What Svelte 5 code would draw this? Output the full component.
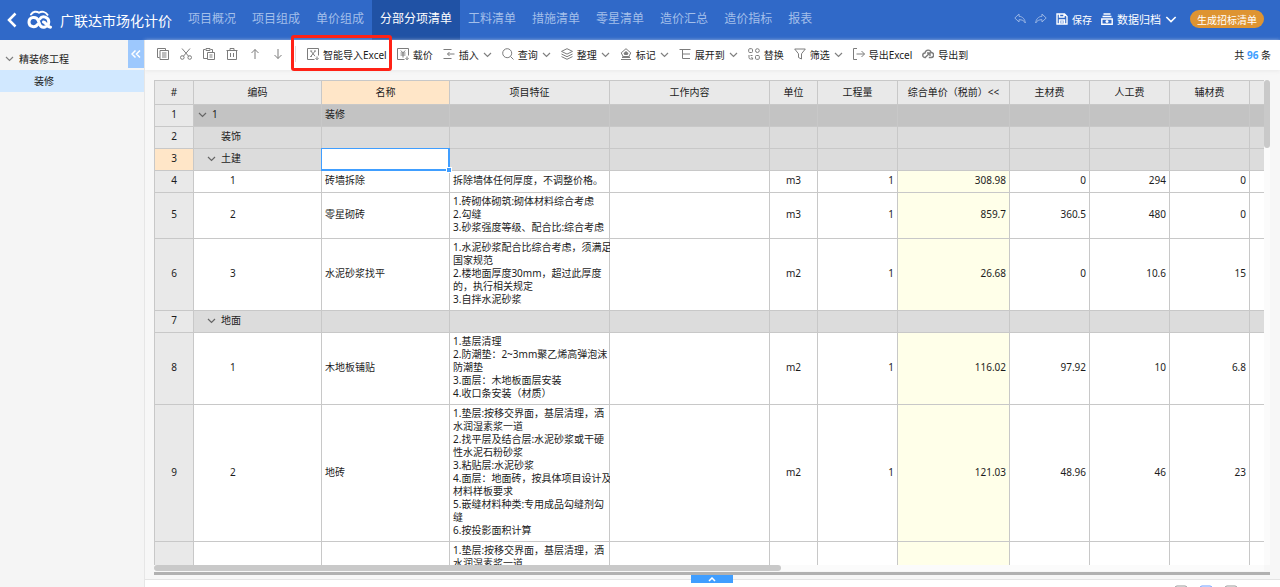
<script>
    const tabs = ['项目概况', '项目组成', '单价组成', '分部分项清单', '工料清单', '措施清单', '零星清单', '造价汇总', '造价指标', '报表'];
    let activeTab = '分部分项清单';

    const editTools = [
        { name: '复制', icon: 'copy' },
        { name: '剪切', icon: 'cut' },
        { name: '粘贴', icon: 'paste' },
        { name: '删除', icon: 'trash' },
        { name: '上移', icon: 'up' },
        { name: '下移', icon: 'down' }
    ];

    const tools = [
        { name: '智能导入Excel', icon: 'excel', marked: true },
        { name: '载价', icon: 'price' },
        { name: '插入', icon: 'insert', menu: true },
        { name: '查询', icon: 'search', menu: true },
        { name: '整理', icon: 'layers', menu: true },
        { name: '标记', icon: 'mark', menu: true },
        { name: '展开到', icon: 'expand', menu: true },
        { name: '替换', icon: 'replace' },
        { name: '筛选', icon: 'filter', menu: true },
        { name: '导出Excel', icon: 'export' },
        { name: '导出到', icon: 'cloud' }
    ];

    const columns = [
        { key: 'no', title: '#', width: 40 },
        { key: 'code', title: '编码', width: 128 },
        { key: 'name', title: '名称', width: 128 },
        { key: 'feature', title: '项目特征', width: 160 },
        { key: 'work', title: '工作内容', width: 160 },
        { key: 'unit', title: '单位', width: 48 },
        { key: 'qty', title: '工程量', width: 80 },
        { key: 'price', title: '综合单价（税前）<<', width: 112 },
        { key: 'main', title: '主材费', width: 80 },
        { key: 'labor', title: '人工费', width: 80 },
        { key: 'aux', title: '辅材费', width: 80 },
        { key: 'more', title: '', width: 80 }
    ];
    const tableWidth = columns.reduce((sum, c) => sum + c.width, 0);

    const rows = [
        { no: 1, level: 0, open: true, code: '1', name: '装修', kind: 'root' },
        { no: 2, level: 1, code: '装饰', kind: 'group' },
        { no: 3, level: 1, open: true, code: '土建', kind: 'group' },
        { no: 4, level: 2, code: '1', name: '砖墙拆除', feature: '拆除墙体任何厚度，不调整价格。', unit: 'm3', qty: 1, price: 308.98, main: 0, labor: 294, aux: 0 },
        { no: 5, level: 2, code: '2', name: '零星砌砖', feature: '1.砖砌体砌筑:砌体材料综合考虑\n2.勾缝\n3.砂浆强度等级、配合比:综合考虑', unit: 'm3', qty: 1, price: 859.7, main: 360.5, labor: 480, aux: 0 },
        { no: 6, level: 2, code: '3', name: '水泥砂浆找平', feature: '1.水泥砂浆配合比综合考虑，须满足\n国家规范\n2.楼地面厚度30mm，超过此厚度\n的，执行相关规定\n3.自拌水泥砂浆', unit: 'm2', qty: 1, price: 26.68, main: 0, labor: 10.6, aux: 15 },
        { no: 7, level: 1, open: true, code: '地面', kind: 'group' },
        { no: 8, level: 2, code: '1', name: '木地板铺贴', feature: '1.基层清理\n2.防潮垫：2~3mm聚乙烯高弹泡沫\n防潮垫\n3.面层：木地板面层安装\n4.收口条安装（材质）', unit: 'm2', qty: 1, price: 116.02, main: 97.92, labor: 10, aux: 6.8 },
        { no: 9, level: 2, code: '2', name: '地砖', feature: '1.垫层:按移交界面，基层清理，洒\n水润湿素浆一道\n2.找平层及结合层:水泥砂浆或干硬\n性水泥石粉砂浆\n3.粘贴层:水泥砂浆\n4.面层：地面砖，按具体项目设计及\n材料样板要求\n5.嵌缝材料种类:专用成品勾缝剂勾\n缝\n6.按投影面积计算', unit: 'm2', qty: 1, price: 121.03, main: 48.96, labor: 46, aux: 23 },
        { level: 2, feature: '1.垫层:按移交界面，基层清理，洒\n水润湿素浆一道' }
    ];

    let selected = { no: 3, key: 'name' };

    function select(row, key) {
        if (row.no && key !== 'no') selected = { no: row.no, key };
    }
</script>

{#snippet icon(name)}
    <svg class="icon" viewBox="0 0 12 12" aria-hidden="true">
        {#if name === 'copy'}
            <path d="M2.5 9.5h-2v-9h8v1.500M3 2.500h8.500v9H3zM5 5h4.500M5 7h4.500M5 9h4.500" />
        {:else if name === 'cut'}
            <path d="M2 .5l6.800 8M10 .5L3.200 8.500" />
            <circle cx="2.300" cy="9.500" r="1.800" />
            <circle cx="9.700" cy="9.500" r="1.800" />
        {:else if name === 'paste'}
            <path d="M4 10.500H.5v-9h2M7.500 1.500h2V4M3 .5h4v2H3zM4.500 4.500h7v7h-7zM6.500 7h3M6.500 9h3" />
        {:else if name === 'trash'}
            <path d="M.5 2.500h11M4 2.500v-2h4v2M1.500 2.500v9h9v-9M4.500 5v4M7.500 5v4" />
        {:else if name === 'up'}
            <path d="M6 11V1.500M2.500 5L6 1.500 9.500 5" />
        {:else if name === 'down'}
            <path d="M6 1v9.500M2.500 7L6 10.500 9.500 7" />
        {:else if name === 'excel'}
            <path d="M7.500 11.500h-7v-11h11v7M4 3.200l4 5M8 3.200l-4 5M3.200 3h2M7 3h2M3.200 8.500h1.600M10 8.500v3M8.500 10.200l1.500 1.500 1.500-1.500" />
        {:else if name === 'price'}
            <path d="M7.500 11.500h-7v-11h11v7M3.800 2.500L6 4.800l2.200-2.300M6 4.800v4.700M3.500 5h5M3.500 7h5M10 8.500v3M8.500 10.200l1.500 1.500 1.500-1.500" />
        {:else if name === 'insert'}
            <path d="M.5 1.500h8M4.500 6h7M.5 10.500h8M6.500 4L4.500 6l2 2" />
        {:else if name === 'search'}
            <circle cx="5.200" cy="5.200" r="4.500" />
            <path d="M8.500 8.500l3 3" />
        {:else if name === 'layers'}
            <path d="M6 .7l5.500 2.700L6 6.100.5 3.400zM.5 6L6 8.700 11.500 6M.5 8.600L6 11.300l5.500-2.700" />
        {:else if name === 'mark'}
            <path d="M1 11.500h10M6 .7l4.800 4.200-2 3.600H3.200l-2-3.600z" />
            <path class="solid" d="M6 3l2.500 2.300L7.500 7h-3l-1-1.700zM2 8.500h8V10H2z" />
        {:else if name === 'expand'}
            <path d="M.5 1.500h11M3.500 1.500v9h7.500M3.500 6H11" />
        {:else if name === 'replace'}
            <rect x=".7" y=".7" width="3.800" height="3.800" rx="1" />
            <rect x="7.500" y="7.500" width="3.800" height="3.800" rx="1" />
            <rect x="7.500" y=".7" width="3.800" height="3.800" rx="2" />
            <path d="M1 7v2.500Q1 11 2.500 11h2.500M3.500 9L5 11M4.500 7.500H2.500" />
        {:else if name === 'filter'}
            <path d="M.7 1h10.600L7.500 5.800v5.200l-3-1.500V5.800z" />
        {:else if name === 'export'}
            <path d="M4 .5H.5v11H4M3.500 6h8M8.500 3l3 3-3 3" />
        {:else if name === 'cloud'}
            <path class="bold" d="M4 9.500H3a2.200 2.200 0 0 1 0-4.500C3.600 1.200 8.400 1.200 9.200 4.500a2.500 2.500 0 0 1-.2 5H6.800M3.500 9.300L7.800 5M5 5h3v3" />
        {:else if name === 'undo'}
            <path d="M5 1L.8 5 5 9V6.700c3 0 5 .8 6.300 3.300C11 6 8.500 3.500 5 3.300z" />
        {:else if name === 'redo'}
            <path d="M7 1l4.200 4L7 9V6.700c-3 0-5 .8-6.300 3.300C1 6 3.500 3.500 7 3.300z" />
        {:else if name === 'save'}
            <path class="bold" d="M1 1h7.500L11 3.500V11H1zM3.500 1v3H8V1M3.500 11V7h5v4M4.500 9h3" />
        {:else if name === 'archive'}
            <path class="bold" d="M2.500 1h7M1.500 3.500h9M.8 6h10.400v5.200H.8zM6 7v3M4.500 8.500h3" />
        {/if}
    </svg>
{/snippet}

{#snippet chevron()}
    <svg class="chevron" viewBox="0 0 9 9" aria-hidden="true"><path d="M1 3l3.500 3.500L8 3" /></svg>
{/snippet}

<div class="app">
    <header>
        <button class="back" aria-label="返回">
            <svg viewBox="0 0 10 16"><path d="M8.500 1.500L2 8l6.500 6.500" /></svg>
        </button>
        <svg class="logo" viewBox="0 0 25 20" aria-hidden="true">
            <path class="thin" d="M4 4.500C6 1.500 9.500 1 12 2.800 14.500 1 18.500 1.500 20.500 4.800" />
            <path d="M10.500 14.500c-1.800 3.200-8.500 3-8.500-2.200 0-5.800 7.500-6.300 9.200-1.800l1.500 4c.8 2.200 3 3 5.300 2.500" />
            <path d="M12.800 9c2.500-3.800 9-2.200 9 3 0 1.800-.6 3.200-1.800 4.200M16.500 12c2.500.5 3.500 5 7 5.200" />
        </svg>
        <h1>广联达市场化计价</h1>
        <nav>
            {#each tabs as tab}
                <a href="#{tab}" class:active={tab === activeTab} on:click|preventDefault={() => (activeTab = tab)}>{tab}</a>
            {/each}
        </nav>
        <div class="actions">
            <button class="faded" aria-label="撤销">{@render icon('undo')}</button>
            <button class="faded" aria-label="恢复">{@render icon('redo')}</button>
            <button>{@render icon('save')}保存</button>
            <button class="archive">{@render icon('archive')}数据归档{@render chevron()}</button>
            <button class="generate">生成招标清单</button>
        </div>
    </header>

    <div class="body">
        <aside>
            <button class="collapse" aria-label="收起">
                <svg viewBox="0 0 10 8"><path d="M4.500.5L1 4l3.500 3.500M9 .5L5.500 4 9 7.500" /></svg>
            </button>
            <a class="project" href="#project">{@render chevron()}精装修工程</a>
            <a class="section" href="#section">装修</a>
        </aside>

        <main>
            <div class="toolbar">
                {#each editTools as tool}
                    <button aria-label={tool.name}>{@render icon(tool.icon)}</button>
                {/each}
                <span class="divider"></span>
                <div class="tools">
                    {#each tools as tool}
                        <button class:marked={tool.marked}>
                            {@render icon(tool.icon)}{tool.name}
                            {#if tool.menu}{@render chevron()}{/if}
                        </button>
                    {/each}
                </div>
                <span class="count">共 <b>96</b> 条</span>
            </div>

            <div class="sheet">
                <div class="viewport">
                    <table style="width: {tableWidth}px">
                        <colgroup>
                            {#each columns as col}
                                <col style="width: {col.width}px" />
                            {/each}
                        </colgroup>
                        <thead>
                            <tr>
                                {#each columns as col}
                                    <th class:current={col.key === selected.key}>{col.title}</th>
                                {/each}
                            </tr>
                        </thead>
                        <tbody>
                            {#each rows as row}
                                <tr class={row.kind}>
                                    {#each columns as col}
                                        <td
                                            class={col.key}
                                            class:current={col.key === 'no' && row.no === selected.no}
                                            on:click={() => select(row, col.key)}
                                        >
                                            {#if col.key === 'code'}
                                                <div class="tree" style="padding-left: {4 + row.level * 9}px">
                                                    <span class="toggle">{#if row.open}{@render chevron()}{/if}</span>{row.code ?? ''}
                                                </div>
                                            {:else}
                                                {row[col.key] ?? ''}
                                            {/if}
                                            {#if row.no === selected.no && col.key === selected.key}
                                                <div class="cursor"></div>
                                            {/if}
                                        </td>
                                    {/each}
                                </tr>
                            {/each}
                        </tbody>
                    </table>
                </div>
                <div class="track vertical"><div class="thumb"></div></div>
                <div class="track horizontal"><div class="thumb"></div></div>
            </div>

            <div class="splitter">
                <button aria-label="展开明细">
                    <svg viewBox="0 0 8 5"><path d="M1 4l3-3 3 3" /></svg>
                </button>
            </div>
            <footer>
                <svg viewBox="0 0 14 12"><rect x="1" y="1" width="12" height="10" rx="2" /></svg>
                <svg class="on" viewBox="0 0 14 12"><rect x="1" y="1" width="12" height="10" rx="2" /></svg>
                <svg viewBox="0 0 14 12"><rect x="1" y="1" width="12" height="10" rx="2" /></svg>
            </footer>
        </main>
    </div>
</div>

<style>
    :global(body) {
        margin: 0;
    }

    .app {
        display: flex;
        flex-direction: column;
        height: 100vh;
        overflow: hidden;
        font-family: "Noto Sans", "Noto Sans CJK SC", sans-serif;
        font-size: 10px;
        color: #1c1c1c;
    }

    button {
        display: flex;
        align-items: center;
        gap: 4px;
        padding: 0;
        border: 0;
        background: none;
        color: inherit;
        font: inherit;
        white-space: nowrap;
        cursor: pointer;
    }

    a {
        color: inherit;
        text-decoration: none;
    }

    svg {
        display: block;
        flex: none;
        fill: none;
        stroke: currentColor;
    }

    .icon {
        width: 12px;
        height: 12px;
        color: #7c7c7c;
    }

    .icon .solid {
        fill: currentColor;
        stroke: none;
    }

    .icon .bold {
        stroke-width: 1.4;
    }

    .chevron {
        width: 9px;
        height: 9px;
        color: #808080;
        stroke-width: 1.2;
    }

    header {
        display: flex;
        align-items: center;
        flex: none;
        height: 40px;
        padding: 0 16px 0 7px;
        background: #3069c8;
        color: #fff;
    }

    .back svg {
        width: 10px;
        height: 16px;
        stroke-width: 2.5;
    }

    .logo {
        width: 25px;
        height: 20px;
        margin: 0 8px 0 10px;
        stroke-width: 3;
        stroke-linecap: round;
        stroke-linejoin: round;
    }

    .logo .thin {
        stroke-width: 2;
    }

    h1 {
        margin: 0 8px 0 0;
        font-size: 14px;
        font-weight: 400;
        white-space: nowrap;
    }

    nav {
        display: flex;
        align-self: stretch;
    }

    nav a {
        padding: 0 8px;
        font-size: 12px;
        line-height: 38px;
        color: #a3bfea;
        white-space: nowrap;
    }

    nav a.active {
        background: #2052a5;
        color: #fff;
    }

    .actions {
        display: flex;
        align-items: center;
        gap: 9px;
        margin-left: auto;
        padding-bottom: 2px;
    }

    .actions .icon,
    .actions .chevron {
        color: #fff;
    }

    .actions .chevron {
        width: 12px;
        height: 12px;
    }

    .actions .faded {
        opacity: 0.5;
    }

    .archive {
        font-size: 11px;
    }

    .actions .generate {
        height: 18px;
        margin-left: 4px;
        padding: 0 7px;
        border-radius: 9px;
        background: #de9432;
    }

    .body {
        display: flex;
        flex: 1;
        min-height: 0;
    }

    aside {
        position: relative;
        flex: none;
        width: 144px;
        border-right: 1px solid #e6e6e6;
        background: #f5f5f5;
    }

    aside a {
        display: flex;
        align-items: center;
        box-sizing: border-box;
    }

    .project {
        gap: 5px;
        height: 30px;
        padding: 6px 0 0 5px;
    }

    .section {
        height: 22px;
        padding: 0 0 2px 34px;
        background: #d1e8ff;
    }

    .collapse {
        position: absolute;
        top: 0;
        right: 0;
        justify-content: center;
        width: 16px;
        height: 28px;
        background: #9dc8fd;
        color: #fff;
    }

    .collapse svg {
        width: 10px;
        height: 8px;
        stroke-width: 1.5;
    }

    main {
        display: flex;
        flex: 1;
        flex-direction: column;
        min-width: 0;
        background: #f7f7f7;
    }

    .toolbar {
        display: flex;
        align-items: center;
        flex: none;
        gap: 11px;
        box-sizing: border-box;
        height: 30px;
        padding: 0 9px 2px 12px;
        background: #fff;
        box-shadow: 0 1px 4px #e9e9e9;
    }

    .divider {
        width: 1px;
        height: 16px;
        background: #ddd;
    }

    .tools {
        display: flex;
        gap: 10px;
    }

    .marked {
        position: relative;
    }

    .marked::after {
        content: "";
        position: absolute;
        inset: -12px -5px -9px -16px;
        border: 3px solid #ff2216;
        border-radius: 3px;
    }

    .count {
        margin-left: auto;
    }

    .count b {
        color: #409eff;
    }

    .sheet {
        display: grid;
        grid-template-columns: minmax(0, 1fr) 6px;
        grid-template-rows: minmax(0, 1fr) 6px;
        flex: 1;
        min-height: 0;
        margin: 10px 10px 0 9px;
    }

    .viewport {
        overflow: hidden;
        border-top: 1px solid #c8c8c8;
    }

    table {
        table-layout: fixed;
        border-collapse: separate;
        border-spacing: 0;
        line-height: 13px;
    }

    th,
    td {
        box-sizing: border-box;
        height: 22px;
        padding: 2px 3px 4px;
        border-right: 1px solid #c8c8c8;
        border-bottom: 1px solid #c8c8c8;
        background: #fff;
    }

    th {
        height: 24px;
        padding: 3px;
        background: #e9e9e9;
        font-weight: 400;
    }

    th:first-child,
    td:first-child {
        border-left: 1px solid #c8c8c8;
    }

    td {
        position: relative;
        text-align: right;
        white-space: nowrap;
    }

    .no,
    .unit {
        text-align: center;
    }

    .code,
    .name,
    .feature {
        text-align: left;
    }

    .code {
        padding: 0 0 2px;
    }

    .feature {
        white-space: pre;
    }

    .price {
        background: #ffffe9;
    }

    .root td {
        background: #c3c3c3;
    }

    .group td {
        background: #dcdcdc;
    }

    tr td.no {
        background: #e9e9e9;
    }

    tr .current,
    tr td.current {
        background: #ffe6c8;
    }

    .tree {
        display: flex;
        align-items: center;
        gap: 5px;
    }

    .toggle {
        width: 9px;
    }

    .tree .chevron {
        color: #666;
    }

    .cursor {
        position: absolute;
        inset: -1px;
        z-index: 1;
        border: solid #409eff;
        border-width: 1px 2px 2px 1px;
        background: #fff;
    }

    .cursor::after {
        content: "";
        position: absolute;
        right: -4px;
        bottom: -4px;
        width: 4px;
        height: 4px;
        border: 1px solid #fff;
        background: #409eff;
    }

    .track {
        background: #fbfbfb;
    }

    .thumb {
        border-radius: 3px;
        background: #c9c9c9;
    }

    .vertical .thumb {
        height: 14%;
    }

    .horizontal .thumb {
        width: 56.5%;
        height: 6px;
    }

    .splitter {
        position: relative;
        flex: none;
        height: 3px;
        margin: 1px 10px 4px 9px;
        background: #b1b1b1;
    }

    .splitter button {
        position: absolute;
        top: 3px;
        left: 50%;
        justify-content: center;
        width: 42px;
        height: 8px;
        margin-left: -21px;
        background: #409eff;
        color: #fff;
    }

    .splitter svg {
        width: 8px;
        height: 5px;
        stroke-width: 1.5;
    }

    footer {
        display: flex;
        align-items: flex-start;
        justify-content: flex-end;
        flex: none;
        gap: 11px;
        box-sizing: border-box;
        height: 8px;
        padding: 5px 42px 0 0;
        overflow: hidden;
        border-top: 1px solid #e4e4e4;
        background: #fff;
    }

    footer svg {
        width: 14px;
        height: 12px;
        color: #999;
    }

    footer .on {
        color: #6f9dff;
    }
</style>
